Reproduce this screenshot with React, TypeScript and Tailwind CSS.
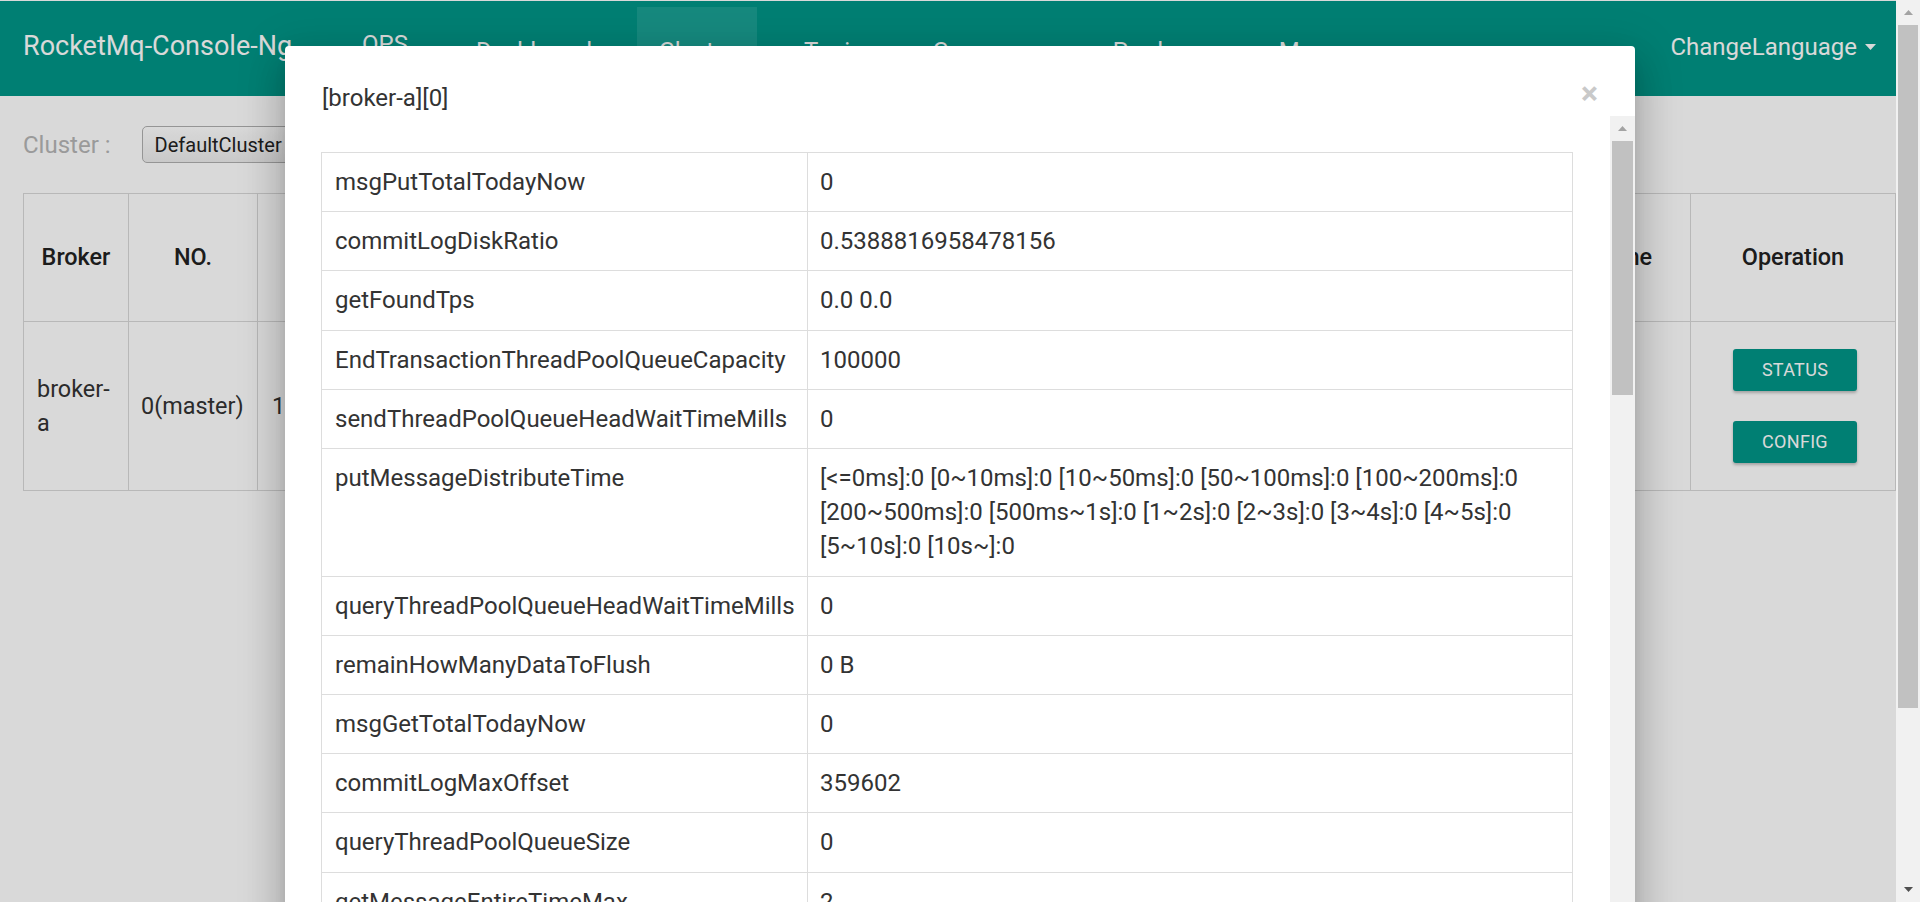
import React from "react";

const detailRows: [string, string][] = [
  ["msgPutTotalTodayNow", "0"],
  ["commitLogDiskRatio", "0.5388816958478156"],
  ["getFoundTps", "0.0 0.0"],
  ["EndTransactionThreadPoolQueueCapacity", "100000"],
  ["sendThreadPoolQueueHeadWaitTimeMills", "0"],
  [
    "putMessageDistributeTime",
    "[<=0ms]:0 [0~10ms]:0 [10~50ms]:0 [50~100ms]:0 [100~200ms]:0 [200~500ms]:0 [500ms~1s]:0 [1~2s]:0 [2~3s]:0 [3~4s]:0 [4~5s]:0 [5~10s]:0 [10s~]:0",
  ],
  ["queryThreadPoolQueueHeadWaitTimeMills", "0"],
  ["remainHowManyDataToFlush", "0 B"],
  ["msgGetTotalTodayNow", "0"],
  ["commitLogMaxOffset", "359602"],
  ["queryThreadPoolQueueSize", "0"],
  ["getMessageEntireTimeMax", "2"],
  ["putMessageTimesTotal", "0"],
  ["bootTimestamp", "1589942365434"],
];

type NavItem = { label: string; cls: string };

const navItems: NavItem[] = [
  { label: "OPS", cls: "flex h-[84px] items-center px-[23px] pb-[10px] text-[24px] leading-none" },
  { label: "Dashboard", cls: "flex h-[84px] items-center px-[21px] pt-[4px] text-[24px] leading-none" },
  { label: "Cluster", cls: "flex h-[84px] items-center bg-white/10 px-[22px] pt-[4px] text-[24px] leading-none" },
  { label: "Topic", cls: "flex h-[84px] items-center px-[23px] pt-[4px] text-[24px] leading-none" },
  { label: "Consumer", cls: "flex h-[84px] items-center px-[23px] pt-[4px] text-[24px] leading-none" },
  { label: "Producer", cls: "flex h-[84px] items-center px-[23px] pt-[4px] text-[24px] leading-none" },
  { label: "Message", cls: "flex h-[84px] items-center px-[22px] pt-[4px] text-[24px] leading-none" },
];

function UpArrow({ color }: { color: string }) {
  return (
    <svg width="9" height="5" viewBox="0 0 9 5">
      <polygon points="0,5 4.5,0 9,5" fill={color} />
    </svg>
  );
}

function DownArrow({ color }: { color: string }) {
  return (
    <svg width="9" height="5" viewBox="0 0 9 5">
      <polygon points="0,0 4.5,5 9,0" fill={color} />
    </svg>
  );
}

export default function App() {
  return (
    <div className="relative flex h-[902px] w-[1920px] overflow-hidden bg-white font-[Roboto,sans-serif]">
      {/* page */}
      <div className="relative flex flex-1 flex-col bg-white pt-[1px]">
        <nav className="flex h-[95px] items-center bg-[#009688] text-white">
          <div className="flex items-center gap-[24px]">
            <div className="px-[23px] pb-[5px] text-[27px] leading-none">RocketMq-Console-Ng</div>
            {navItems.map((item) => (
              <div key={item.label} className={item.cls}>
                {item.label}
              </div>
            ))}
          </div>
          <div className="ml-auto flex items-center gap-[8px] pb-[4px] pr-[20px] text-[24px] leading-none">
            <span>ChangeLanguage</span>
            <svg width="11" height="6" viewBox="0 0 11 6">
              <polygon points="0,0 11,0 5.5,6" fill="#ffffff" />
            </svg>
          </div>
        </nav>

        <div className="mt-[30px] flex h-[37px] items-center pl-[23px]">
          <span className="text-[24px] leading-none text-[#b5b5b5]">Cluster :</span>
          <div className="ml-[31px] flex h-[37px] w-[230px] items-center justify-between rounded-[5px] border border-[#b0b0b0] bg-gradient-to-b from-[#ffffff] to-[#ededed] pl-[12px] pr-[10px] text-[20px] leading-none text-[#222]">
            <span>DefaultCluster</span>
            <DownArrow color="#555" />
          </div>
        </div>

        <table className="ml-[23px] mt-[30px] w-[1872px] table-fixed border-collapse text-[23.4px] leading-[34.5px]">
          <colgroup>
            <col className="w-[105px]" />
            <col className="w-[129px]" />
            <col className="w-[260px]" />
            <col className="w-[170px]" />
            <col className="w-[175px]" />
            <col className="w-[175px]" />
            <col className="w-[175px]" />
            <col className="w-[175px]" />
            <col className="w-[173px]" />
            <col className="w-[130px]" />
            <col className="w-[205px]" />
          </colgroup>
          <thead>
            <tr className="h-[128px]">
              {[
                "Broker",
                "NO.",
                "Address",
                "Version",
                "Produce Massage TPS",
                "Consumer Massage TPS",
                "Yesterday Produce Count",
                "Yesterday Consume Count",
                "Today Produce Count",
                "Time",
                "Operation",
              ].map((h) => (
                <th
                  key={h}
                  className="overflow-hidden border border-[#d9d9d9] px-[13px] text-center align-middle font-medium text-[#222]"
                >
                  {h}
                </th>
              ))}
            </tr>
          </thead>
          <tbody>
            <tr className="h-[169px]">
              <td className="overflow-hidden border border-[#d9d9d9] px-[13px] align-middle text-[#333]">broker-a</td>
              <td className="overflow-hidden border border-[#d9d9d9] px-[12px] align-middle text-[#333]">0(master)</td>
              <td className="overflow-hidden whitespace-nowrap border border-[#d9d9d9] px-[14px] align-middle text-[#333]">172.17.0.2:10911</td>
              <td className="overflow-hidden border border-[#d9d9d9] px-[13px] align-middle text-[#333]">V4_7_0</td>
              <td className="overflow-hidden border border-[#d9d9d9] px-[13px] align-middle text-[#333]">0.00</td>
              <td className="overflow-hidden border border-[#d9d9d9] px-[13px] align-middle text-[#333]">0.00</td>
              <td className="overflow-hidden border border-[#d9d9d9] px-[13px] align-middle text-[#333]">0</td>
              <td className="overflow-hidden border border-[#d9d9d9] px-[13px] align-middle text-[#333]">0</td>
              <td className="overflow-hidden border border-[#d9d9d9] px-[13px] align-middle text-[#333]">0</td>
              <td className="overflow-hidden border border-[#d9d9d9] px-[13px] align-middle text-[#333]">0</td>
              <td className="border border-[#d9d9d9] align-middle">
                <div className="flex flex-col items-center gap-[30px] pl-[4px]">
                  <button className="h-[42px] w-[124px] rounded-[3px] bg-[#009688] text-[18px] leading-none tracking-[0.3px] text-white shadow-[0_2px_3px_rgba(0,0,0,0.25)]">
                    STATUS
                  </button>
                  <button className="h-[42px] w-[124px] rounded-[3px] bg-[#009688] text-[18px] leading-none tracking-[0.3px] text-white shadow-[0_2px_3px_rgba(0,0,0,0.25)]">
                    CONFIG
                  </button>
                </div>
              </td>
            </tr>
          </tbody>
        </table>

        {/* backdrop */}
        <div className="absolute inset-0 bg-black/15" />
      </div>

      {/* page scrollbar */}
      <div className="flex w-[25px] flex-col bg-[#f1f1f1]">
        <div className="flex h-[25px] items-center justify-center">
          <UpArrow color="#a3a3a3" />
        </div>
        <div className="mx-[2px] h-[683px] bg-[#c1c1c1]" />
        <div className="flex-1" />
        <div className="flex h-[25px] items-center justify-center">
          <DownArrow color="#505050" />
        </div>
      </div>

      {/* modal */}
      <div className="absolute left-[285px] top-[46px] flex h-[900px] w-[1350px] flex-col rounded-[4px] bg-white shadow-[0_24px_38px_3px_rgba(0,0,0,0.14),0_9px_46px_8px_rgba(0,0,0,0.12),0_11px_15px_-7px_rgba(0,0,0,0.2)]">
        <div className="flex h-[70px] items-start justify-between pl-[37px] pr-[37px] pt-[35px]">
          <h4 className="text-[24px] leading-[35px] text-[#333]">[broker-a][0]</h4>
          <span className="mt-[-4px] text-[32px] font-bold leading-none text-[#c9c9c9]">×</span>
        </div>
        <div className="flex min-h-0 flex-1">
          <div className="min-w-0 flex-1 overflow-hidden pl-[36px] pr-[37px] pt-[36px]">
            <table className="w-full table-fixed border-collapse border border-[#dddddd] text-[24px] leading-[34.2px] text-[#333]">
              <colgroup>
                <col className="w-[486px]" />
                <col />
              </colgroup>
              <tbody>
                {detailRows.map(([k, v]) => (
                  <tr key={k}>
                    <td className="border border-[#dddddd] px-[13px] py-[12px] align-top">{k}</td>
                    <td className="border border-[#dddddd] px-[12px] py-[12px] align-top">{v}</td>
                  </tr>
                ))}
              </tbody>
            </table>
          </div>
          <div className="flex w-[25px] flex-col bg-[#f1f1f1]">
            <div className="flex h-[25px] items-center justify-center">
              <UpArrow color="#a3a3a3" />
            </div>
            <div className="mx-[2px] h-[254px] bg-[#c1c1c1]" />
          </div>
        </div>
      </div>
    </div>
  );
}
